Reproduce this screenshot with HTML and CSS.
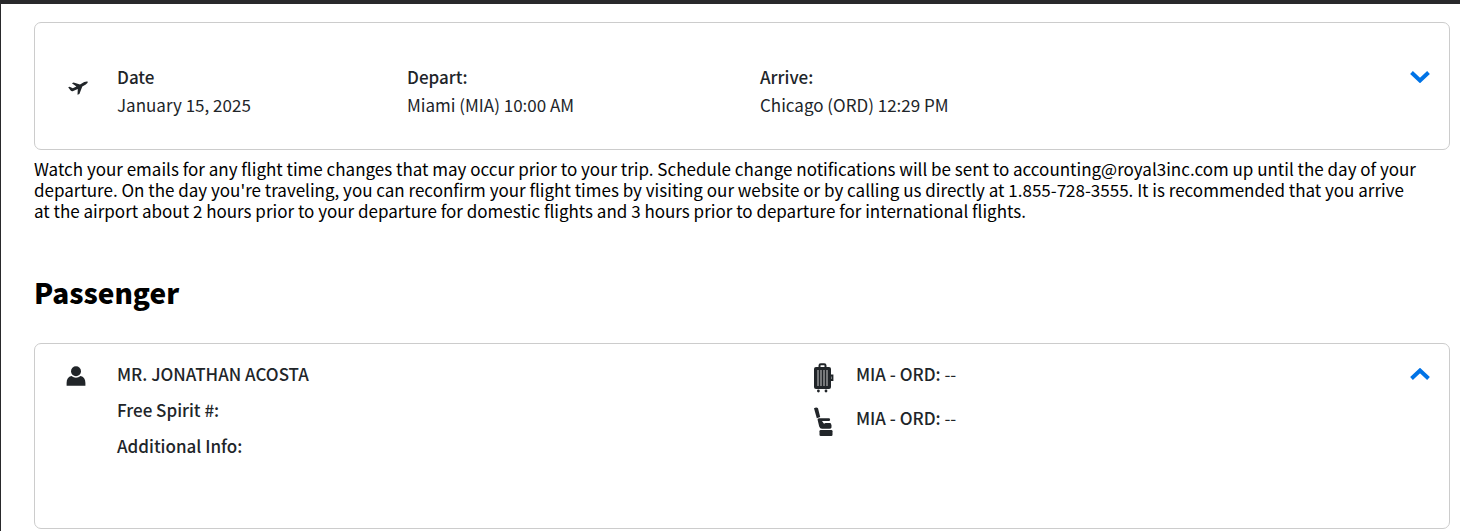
FILE: index.html
```html
<!DOCTYPE html>
<html lang="en">
<head>
  <meta charset="UTF-8" />
  <meta name="viewport" content="width=device-width, initial-scale=1.0"/>
  <title>Flight Confirmation</title>
  <link rel="stylesheet" href="styles.css">
</head>
<body>
  <main class="container">
    <section class="card flight-card">
      <svg class="icon plane-icon" viewBox="0 0 20 14" aria-hidden="true">
        <path d="M0.2 6.2 L1.6 5.7 L4.8 7.2 L8.4 5.4 L3.9 2.3 L5.6 1.5 L12 3.4 L16.2 1.1 C17.6 .4 19.2 .1 19.7 .7 C20.1 1.5 19.1 2.7 17.8 3.4 L14.3 5.5 L11.4 13.1 L9.5 13.8 L9.8 8 L5.2 10 C4.1 10.4 3.2 10.1 2.4 9.3 Z"/>
      </svg>
      <div class="flight-info">
        <div>
          <div class="label">Date</div>
          <div>January 15, 2025</div>
        </div>
        <div>
          <div class="label">Depart:</div>
          <div>Miami (MIA) 10:00 AM</div>
        </div>
        <div>
          <div class="label">Arrive:</div>
          <div>Chicago (ORD) 12:29 PM</div>
        </div>
      </div>
      <button class="toggle-btn" type="button" aria-label="Show flight details">
        <svg viewBox="0 0 20 12"><path d="M1.5 1.5 L10 9.5 L18.5 1.5"/></svg>
      </button>
    </section>

    <p class="notice">
      Watch your emails for any flight time changes that may occur prior to your trip. Schedule change notifications will be sent to accounting@royal3inc.com up until the day of your departure. On the day you're traveling, you can reconfirm your flight times by visiting our website or by calling us directly at 1.855-728-3555. It is recommended that you arrive at the airport about 2 hours prior to your departure for domestic flights and 3 hours prior to departure for international flights.
    </p>

    <h2>Passenger</h2>

    <section class="card passenger-card">
      <svg class="icon person-icon" viewBox="0 0 20 20" aria-hidden="true">
        <circle cx="10" cy="5.2" r="5"/>
        <path d="M.6 19.8 V17 C.6 13 2.4 10.7 5.4 10 Q10 13.4 14.6 10 C17.6 10.7 19.4 13 19.4 17 V19.8 Z"/>
      </svg>
      <div class="passenger-info">
        <div class="details">
          <div class="label">MR. JONATHAN ACOSTA</div>
          <div class="label">Free Spirit #:</div>
          <div class="label">Additional Info:</div>
        </div>
        <div class="extras">
          <div class="extra">
            <!-- suitcase -->
            <svg class="extra-icon" viewBox="0 0 20 30" aria-hidden="true">
              <path class="line" d="M5.5 5 V2.5 Q5.5 1.2 6.8 1.2 H10.2 Q11.5 1.2 11.5 2.5 V5 M16 12.5 H18.4 V17 H16"/>
              <rect x="0" y="4" width="17" height="22" rx="2"/>
              <path class="stripe" d="M4 7 V23 M7 7 V23 M10 7 V23 M13 7 V23"/>
              <circle cx="4.4" cy="28" r="1.4"/>
              <circle cx="12" cy="28" r="1.4"/>
            </svg>
            <div><span class="label">MIA - ORD:</span> --</div>
          </div>
          <div class="extra">
            <!-- seat -->
            <svg class="extra-icon" viewBox="0 0 20 30" aria-hidden="true">
              <path d="M0 1.2 Q2.5 -.4 4 1.2 L6.2 10 L2.8 11.2 Z"/>
              <path d="M3.6 12.8 Q3.2 11.3 5 11.3 H15.5 Q16.8 12.7 15.5 14 H8 L10 16.8 L11.5 16 H16.5 Q18.4 18.5 17.5 20.5 Q17 21.8 15.5 21.8 H8 Q6 21.8 5.2 19.5 Z"/>
              <rect x="5.5" y="23" width="13" height="6" rx="1.2"/>
            </svg>
            <div><span class="label">MIA - ORD:</span> --</div>
          </div>
        </div>
      </div>
      <button class="toggle-btn" type="button" aria-label="Hide passenger details">
        <svg viewBox="0 0 20 12"><path d="M1.5 10.5 L10 2.5 L18.5 10.5"/></svg>
      </button>
    </section>
  </main>
</body>
</html>
```
FILE: styles.css
```css
* {
  box-sizing: border-box;
}
body {
  margin: 0;
  min-height: 100vh;
  border-top: 4px solid #29292b;
  border-left: 1px solid #29292b;
  background-color: #fff;
  color: #212529;
  font-family: "Noto Sans CJK SC", "Noto Sans", sans-serif;
  font-size: 17px;
  line-height: 28px;
}
.container {
  padding: 18px 10px 2px 33px;
}
.card {
  display: flex;
  align-items: flex-start;
  border: 1px solid #ccc;
  border-radius: 7px;
}
.label {
  font-weight: 500;
}
.icon {
  flex: none;
  width: 20px;
  fill: #212529;
}
/* Flight */
.flight-card {
  padding: 40px 19px 30px 33px;
}
.plane-icon {
  height: 14px;
  margin-top: 18px;
}
.flight-info {
  flex: 1;
  display: grid;
  grid-template-columns: 290fr 353fr 650fr;
  margin-left: 29px;
}
.toggle-btn {
  flex: none;
  width: 20px;
  height: 28px;
  padding: 0;
  border: none;
  background: none;
  cursor: pointer;
}
.toggle-btn svg {
  display: block;
  width: 20px;
  height: 12px;
  margin: auto;
  fill: none;
  stroke: #0073e6;
  stroke-width: 4;
}
.notice {
  margin: 8px 0 0;
  padding-right: 30px;
  color: #000;
  line-height: 21px;
}
h2 {
  margin: 51px 0 31px;
  color: #000;
  font-size: 28px;
  line-height: 40px;
  font-weight: 900;
}
/* Passenger */
.passenger-card {
  min-height: 186px;
  padding: 16px 19px 16px 31px;
}
.person-icon {
  height: 20px;
  margin-top: 6px;
}
.passenger-info {
  flex: 1;
  display: grid;
  grid-template-columns: 697fr 596fr;
  margin-left: 31px;
}
.details {
  display: flex;
  flex-direction: column;
  gap: 8px;
}
.extras {
  display: flex;
  flex-direction: column;
  gap: 16px;
}
.extra {
  display: flex;
  gap: 22px;
  height: 28px;
}
.extra-icon {
  flex: none;
  width: 20px;
  height: 30px;
  margin-top: 3px;
  fill: #212529;
}
.extra-icon .line {
  fill: none;
  stroke: #212529;
  stroke-width: 2;
}
.extra-icon .stripe {
  stroke: #ccc;
}
```
